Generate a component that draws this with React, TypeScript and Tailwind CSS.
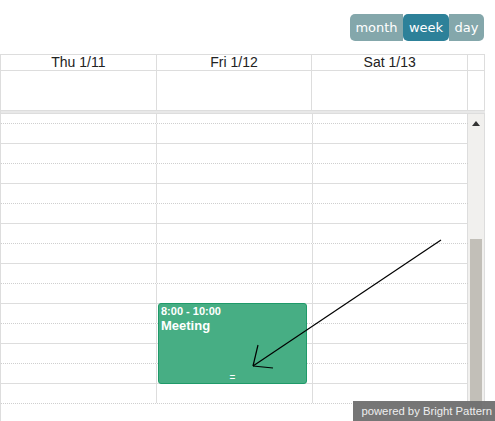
import React from "react";

const DAYS = ["Thu 1/11", "Fri 1/12", "Sat 1/13"];

// slot rows: first one is half-visible (scrolled by 10px)
const ROWS = Array.from({ length: 15 }, (_, i) => i);

const App: React.FC = () => {
  return (
    <div className="relative w-[495px] h-[421px] overflow-hidden bg-white font-['DejaVu_Sans',sans-serif]">
      {/* Toolbar */}
      <div className="flex justify-end h-[54px] pt-[14px] pr-[11px]">
        <div className="flex h-[27px] rounded-[5px] overflow-hidden text-[13px] text-white">
          <button className="w-[53px] bg-[#84a7ab]">month</button>
          <button className="w-[46px] bg-[#2d8199] rounded-[5px]">week</button>
          <button className="w-[35px] bg-[#84a7ab]">day</button>
        </div>
      </div>

      <div className="w-[485px] border-l border-[#dddddd]">
        {/* Header */}
        <div className="flex border-t border-b border-[#dddddd] h-[17px] font-['Liberation_Sans',sans-serif] text-[14px] text-[#222]">
          {DAYS.map((d) => (
            <div key={d} className="w-[156px] border-r border-[#dddddd] text-center leading-[15px]">
              {d}
            </div>
          ))}
          <div className="w-[17px] border-r border-[#dddddd]" />
        </div>

        {/* All-day row */}
        <div className="flex h-[40px] border-b border-[#dddddd]">
          {DAYS.map((d) => (
            <div key={d} className="w-[156px] border-r border-[#dddddd]" />
          ))}
          <div className="w-[17px] border-r border-[#dddddd]" />
        </div>
        <div className="h-[3px] bg-[#e8e8e8] border-b border-[#dddddd]" />

        {/* Time slots */}
        <div className="flex h-[308px]">
          <div className="relative w-[467px]">
            {ROWS.map((i) => (
              <div
                key={i}
                className={`grid grid-cols-[156px_156px_155px] border-b ${
                  i === 0 ? "h-[10px]" : "h-[20px]"
                } ${i % 2 === 0 ? "border-dotted border-[#cfcfcf]" : "border-solid border-[#dddddd]"}`}
              >
                <div className="border-r border-solid border-[#dddddd]" />
                <div className="border-r border-solid border-[#dddddd]" />
                <div className="border-r border-solid border-[#dddddd]" />
              </div>
            ))}

            {/* Event */}
            <div className="absolute left-[157px] top-[189px] w-[149px] h-[81px] rounded-[3px] border border-[#1f9a69] bg-[#47ae84] text-white px-[2px] font-['Liberation_Sans',sans-serif]">
              <div className="text-[11px] font-bold leading-[13px] mt-[1px]">8:00 - 10:00</div>
              <div className="text-[13px] font-bold leading-[16px]">Meeting</div>
              <div className="absolute bottom-[0px] left-0 right-0 text-center text-[10px] leading-[10px]">=</div>
            </div>
          </div>

          {/* Scrollbar */}
          <div className="flex flex-col w-[17px] bg-[#f1f0ee] border-r border-[#dddddd]">
            <div className="flex justify-center pt-[7px] h-[125px]">
              <div className="w-0 h-0 border-l-[4px] border-r-[4px] border-b-[5px] border-l-transparent border-r-transparent border-b-[#333]" />
            </div>
            <div className="mx-[2px] flex-1 bg-[#c2bfb8]" />
          </div>
        </div>
      </div>

      {/* Arrow annotation */}
      <svg className="absolute left-0 top-0 pointer-events-none" width="495" height="421">
        <g stroke="#000" strokeWidth="1.2" fill="none">
          <line x1="441" y1="240" x2="253" y2="366" />
          <line x1="253" y1="366" x2="258" y2="345" />
          <line x1="253" y1="366" x2="273" y2="368" />
        </g>
      </svg>

      {/* Powered by badge */}
      <div className="absolute right-0 bottom-0 h-[20px] pl-[8px] pr-[3px] bg-[#6f6f6f]/95 text-[#eeeeee] text-[11.3px] leading-[20px] font-['Liberation_Sans',sans-serif]">
        powered by Bright Pattern
      </div>
    </div>
  );
};

export default App;
